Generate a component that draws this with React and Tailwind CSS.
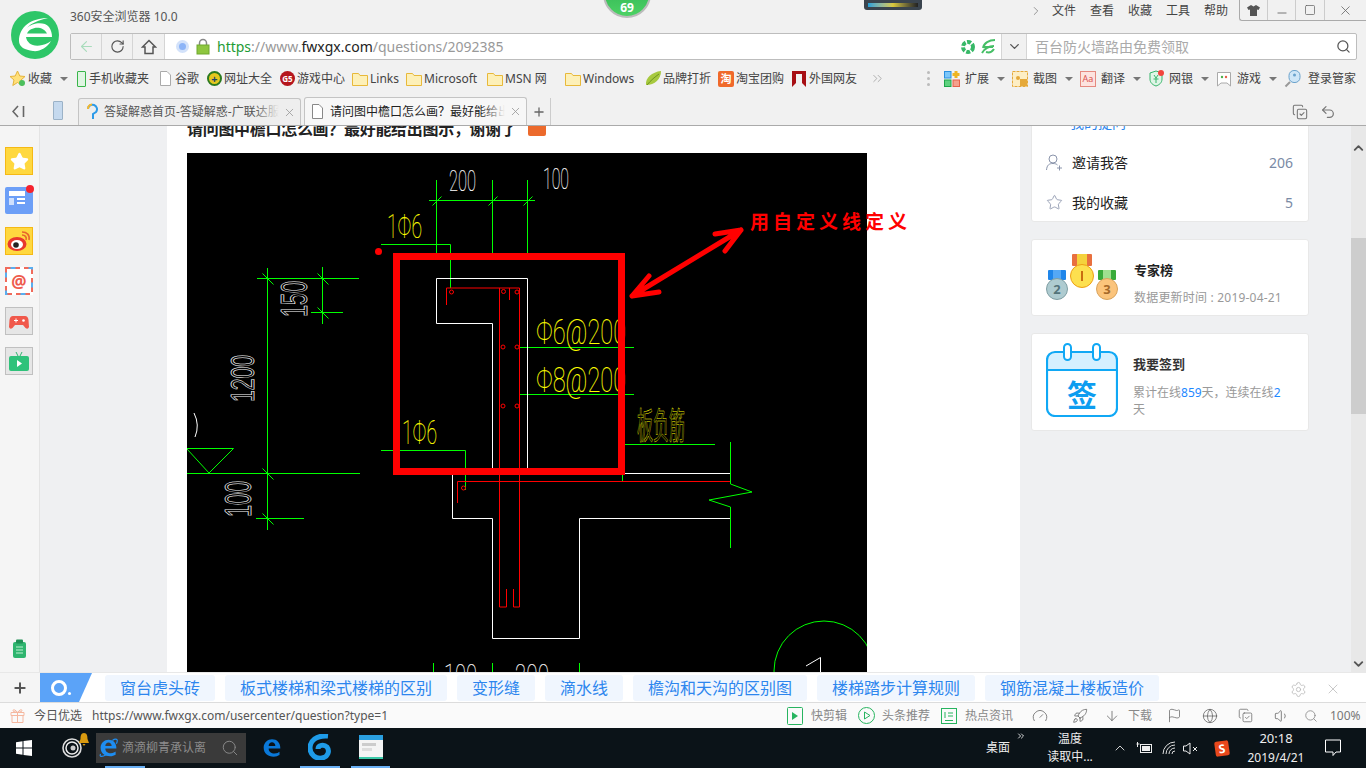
import React from "react";
import { Star, X, Search, ChevronRight, ChevronDown, ChevronUp, ChevronsRight, RotateCw, Plus, Settings, ArrowLeft, Minus, Square, Undo2, CopyCheck, ArrowDown, Flag, Volume1, Rocket, Gauge, Globe } from "lucide-react";

const TITLE = "请问图中檐口怎么画\uFF1F最好能给出图示\uFF0C谢谢了";
const Caret = () => <span className="ml-[8px] w-0 h-0 border-x-[4px] border-x-transparent border-t-[4px] border-t-[#777] inline-block" />;
const Folder = () => (
  <svg width="16" height="15" viewBox="0 0 16 15"><path d="M.5 2.500h6l1.500 2h7.500v10H.5z" fill="#fdf0b8" stroke="#e8b93a" /></svg>
);
const E_PATH = "M2 12C2 6 7 2 12 2C18 2 22 6 22 13H8C8 17 11 19 15 19C18 19 20 18 21 17V21C19 22 17 23 14 23C7 23 2 19 2 12zM8 10H16C16 7 14 5.500 12 5.500C10 5.500 8 7 8 10z";
function BM({ w, box, icon, text, caret, cls = "" }) {
  return (
    <div className={`flex items-center shrink-0 ${w} ${cls}`}>
      <div className={`flex items-center shrink-0 ${box}`}>{icon}</div>
      <span className="whitespace-nowrap">{text}</span>
      {caret && <Caret />}
    </div>
  );
}
function Tab({ active, icon, text }) {
  return (
    <div className={`relative flex items-center w-[223px] rounded-t-[3px] border border-b-0 border-[#c4c4c4] ${active ? "h-[28px] bg-[#f7f7f7]" : "h-[27px] bg-[#eeeeee]"}`}>
      <div className="w-[25px] flex justify-center shrink-0">{icon}</div>
      <div className={`w-[175px] overflow-hidden whitespace-nowrap relative ${active ? "text-[#222]" : "text-[#555]"}`}>
        {text}
        <div className={`absolute right-0 top-0 bottom-0 w-[24px] bg-gradient-to-r from-transparent ${active ? "to-[#f7f7f7]" : "to-[#eeeeee]"}`} />
      </div>
      <X size={13} className="ml-[4px] text-[#999]" strokeWidth={1.500} />
    </div>
  );
}
const Pill = ({ t }) => <div className="h-[26px] px-[15px] flex items-center bg-[#f0f6fe] text-[#2d86ee] text-[16px] rounded-[3px] whitespace-nowrap shrink-0">{t}</div>;
const SideIcon = ({ children, cls = "" }) => <div className={`relative w-[28px] h-[28px] flex items-center justify-center ${cls}`}>{children}</div>;

function Cad({ x, y, t, size = 28, len, color = "#fff" }) {
  return (
    <text x={x} y={y} fontSize={size} textLength={len} lengthAdjust="spacingAndGlyphs" fill={color} fontWeight="100"
      stroke={color} strokeWidth="0.15" fontFamily="Roboto, 'Liberation Sans', sans-serif">{t}</text>
  );
}
function CadRot({ x, y, t, size = 28, len }) {
  return (
    <text x={x} y={y} fontSize={size} textLength={len} lengthAdjust="spacingAndGlyphs" fill="none" stroke="#fff" strokeWidth="0.75"
      fontFamily="'Liberation Sans', sans-serif" transform={`rotate(-90 ${x} ${y})`}>{t}</text>
  );
}
const Tick = ({ x, y, back }) => back
  ? <path d={`M${x - 5} ${y - 5}L${x + 6} ${y + 6}`} stroke="#0f0" />
  : <path d={`M${x - 4} ${y + 5}L${x + 5} ${y - 4}`} stroke="#0f0" />;

function Drawing() {
  const g = "#00ff00", r = "#ff0000", w = "#ffffff", y = "#ffff00";
  const circles = [[503.500, 291.500], [517, 292], [451.500, 292], [503, 347], [517, 347], [503, 406], [517, 406], [463.500, 488]];
  return (
    <svg width="680" height="520" viewBox="187 153 680 520" className="block bg-black overflow-visible shrink-0">
      <defs><clipPath id="imgclip"><rect x="187" y="153" width="680" height="520" /></clipPath></defs>
      <g clipPath="url(#imgclip)">
      <g fill="none" stroke={g} strokeWidth="1">
        <path d="M436.500 180V253M492.500 180V253M527.500 180V253M429 200.500H535" />
        <path d="M381 244.500H450.500V288" />
        <path d="M267.500 268V530M257 278.500H359M322.500 267V324M311 312.500H343" />
        <path d="M187 473.500H360M256 518.500H304M187 448.500H233.500L209 473M187 449L209 473" />
        <path d="M381 450.500H465.500V490" />
        <path d="M520 347.500H634M520 394.500H634M625 444.500H715" />
        <path d="M730.500 442V484L752 492L709 500L730.500 507V548M622.500 475V481" />
        <path d="M433.500 663V673M492.500 663V673M579.500 663V673" />
        <circle cx="824" cy="671" r="50" />
      </g>
      <Tick x={436.500} y={200.500} /><Tick x={492.500} y={200.500} /><Tick x={527.500} y={200.500} />
      <Tick x={267.500} y={278.500} back /><Tick x={322.500} y={278.500} back /><Tick x={322.500} y={312.500} back />
      <Tick x={267.500} y={473.500} back /><Tick x={267.500} y={518.500} back />
      <g fill="none" stroke={w} strokeWidth="1">
        <path d="M436.500 278.500H527.500V473.500H730M436.500 278.500V323.500H492.500V468" />
        <path d="M452.500 473V518.500H492.500V638.500H579.500V518.500H730" />
        <path d="M194 413Q200 425 195 437" />
        <path d="M806 666L820.500 657.500V673" />
      </g>
      <g fill="none" stroke={r} strokeWidth="1">
        <path d="M446.500 305V288H519.500V589" />
        <path d="M499.500 288V607H506.500V589M513.500 589V607H519.500V589M509.500 288V300" />
        <path d="M457.500 503V481.500H730" />
        {circles.map(([a, b], i) => <circle key={i} cx={a} cy={b} r="2" />)}
      </g>
      <Cad x={449} y={191} t="200" size={29} len={27} />
      <Cad x={543} y={189} t="100" size={29} len={26} />
      <CadRot x={307} y={317} t="150" size={36} len={36} />
      <CadRot x={254} y={402} t="1200" size={34} len={47} />
      <CadRot x={251} y={517} t="100" size={36} len={36} />
      <Cad x={444} y={685} t="100" size={30} len={33} />
      <Cad x={515} y={685} t="200" size={30} len={34} />
      <Cad x={387} y={238} t="1Φ6" size={34} len={35} color={y} />
      <Cad x={402} y={444} t="1Φ6" size={34} len={35} color={y} />
      <Cad x={536} y={344} t="Φ6@200" size={35} len={90} color={y} />
      <Cad x={536} y={391.500} t="Φ8@200" size={35} len={90} color={y} />
      <text x="637" y="439" fontSize="36" textLength="48" lengthAdjust="spacingAndGlyphs" fill="none" stroke={y} strokeWidth="0.5" fontFamily="'Noto Sans CJK SC', sans-serif">板负筋</text>
      <circle cx="378.500" cy="251.500" r="3.500" fill={r} />
      <rect x="396.500" y="256.500" width="225" height="215" fill="none" stroke={r} strokeWidth="7" />
      <path d="M632 296L741 230M632 296L649 276M632 296L659 292M741 230L715 234M741 230L725 251" fill="none" stroke={r} strokeWidth="5" strokeLinecap="round" />
      </g>
      <text x="750" y="229" fontSize="19" letterSpacing="4" fill={r} fontWeight="700" fontFamily="'Noto Sans CJK SC', sans-serif">用自定义线定义</text>
    </svg>
  );
}

function Medals() {
  return (
    <svg width="73" height="47" viewBox="0 0 73 47" className="shrink-0">
      <rect x="2" y="16" width="18" height="10" rx="1" fill="#1f86ea" />
      <rect x="7" y="16" width="8" height="10" fill="#55a8f5" />
      <circle cx="11" cy="35" r="10.500" fill="#aecbd0" stroke="#7f9ea3" />
      <text x="11" y="40" textAnchor="middle" fontSize="13" fontWeight="700" fill="#53737a">2</text>
      <rect x="52" y="16" width="18" height="10" rx="1" fill="#3aab3a" />
      <rect x="57" y="16" width="8" height="10" fill="#9fe08f" />
      <circle cx="61" cy="35" r="10.500" fill="#fbc47c" stroke="#d9a35c" />
      <text x="61" y="40" textAnchor="middle" fontSize="13" fontWeight="700" fill="#a5682a">3</text>
      <rect x="26" y="0" width="20" height="12" rx="1" fill="#e8703f" />
      <rect x="31" y="0" width="10" height="12" fill="#f5d23c" />
      <circle cx="36" cy="22" r="11.500" fill="#fde04f" stroke="#ee9f14" />
      <rect x="35" y="17" width="2" height="10" fill="#c96d10" />
    </svg>
  );
}
function Calendar() {
  return (
    <svg width="72" height="74" viewBox="0 0 72 74" className="shrink-0 mt-[-4px]">
      <path d="M1 27V16a7 7 0 0 1 7-7h56a7 7 0 0 1 7 7v11z" fill="#d5f0ff" />
      <rect x="1" y="9" width="70" height="64" rx="8" fill="none" stroke="#10a8f5" strokeWidth="2.200" />
      <path d="M1 27H71" stroke="#10a8f5" strokeWidth="2" />
      <rect x="18" y="1" width="7" height="16" rx="3.500" fill="#fff" stroke="#10a8f5" strokeWidth="2" />
      <rect x="47" y="1" width="7" height="16" rx="3.500" fill="#fff" stroke="#10a8f5" strokeWidth="2" />
      <text x="36" y="63" textAnchor="middle" fontSize="30" fontWeight="700" fill="#0d9df0" fontFamily="'Noto Sans CJK SC', sans-serif">签</text>
    </svg>
  );
}
const Logo = () => (
  <svg width="48" height="48" viewBox="0 0 48 48">
    <circle cx="24" cy="24" r="24" fill="#2ec668" />
    <path d="M8 30C8 16 20 7 37 7C28 9 20 12 16 17C21 12 33 10 38 16C40 19 41 22 41 26H15C16 33 24 38 37 32L40 30C36 37 28 41 22 40C14 39 8 36 8 30z" fill="#fff" />
    <path d="M16 22.500C19 15.500 32 14 36 22.500z" fill="#2ec668" />
  </svg>
);

export default function App() {
  return (
    <div className="relative w-[1366px] h-[768px] overflow-hidden flex flex-col bg-white text-[12px] font-['Noto_Sans','Noto_Sans_CJK_SC',sans-serif]">
      <div className="absolute left-[603px] top-[-30px] w-[48px] h-[48px] rounded-full bg-gradient-to-b from-[#24a94f] to-[#4cd264] border-2 border-[#bbb] flex items-end justify-center z-10">
        <span className="text-white text-[12px] font-bold leading-[16px]">69</span>
      </div>
      <div className="absolute left-[864px] top-0 w-[58px] h-[10px] bg-[#3a444e] rounded-b-[3px] flex items-center justify-center z-10">
        <div className="w-[50px] h-[4px] bg-gradient-to-r from-[#1d9fd8] via-[#d9c83a] to-[#222]" />
      </div>

      <div className="h-[126px] shrink-0 bg-[#f1f1f1] flex flex-col text-[#444]">
        <div className="flex h-[67px]">
          <div className="w-[70px] pl-[11px] pt-[11px] shrink-0"><Logo /></div>
          <div className="flex-1 flex flex-col">
            <div className="h-[33px] flex justify-between items-start">
              <div className="text-[#555] h-[33px] leading-[34px] whitespace-nowrap">360安全浏览器 10.0</div>
              <div className="flex items-start">
                <div className="flex items-center h-[21px] text-[#444]">
                  <ChevronRight size={14} className="text-[#888] mr-[9px]" strokeWidth={1.500} />
                  <span className="w-[38px]">文件</span><span className="w-[38px]">查看</span><span className="w-[38px]">收藏</span><span className="w-[38px]">工具</span><span className="w-[35px]">帮助</span>
                </div>
                <div className="flex h-[21px] border-l border-b border-[#aaa] rounded-bl-[3px]">
                  <div className="w-[28px] flex items-center justify-center border-r border-[#ccc]">
                    <svg width="13" height="11" viewBox="0 0 13 11"><path d="M4 0L0 2.500L1.500 5L3 4.500V11H10V4.500L11.500 5L13 2.500L9 0L6.500 1.500z" fill="#555" /></svg>
                  </div>
                  <div className="w-[28px] flex items-center justify-center border-r border-[#ccc]"><Minus size={14} className="text-[#666] mt-[5px]" strokeWidth={1.500} /></div>
                  <div className="w-[29px] flex items-center justify-center border-r border-[#ccc]"><Square size={12} className="text-[#666]" strokeWidth={1.500} /></div>
                  <div className="w-[41px] flex items-center justify-center"><X size={15} className="text-[#666]" strokeWidth={1.300} /></div>
                </div>
              </div>
            </div>
            <div className="h-[27px] mr-[9px] flex border border-[#bdbdbd] rounded-[2px] bg-white">
              <div className="w-[31px] flex items-center justify-center bg-[#f1f1f1] border-r border-[#d5d5d5]"><ArrowLeft size={17} className="text-[#a9dcbc]" strokeWidth={1.600} /></div>
              <div className="w-[31px] flex items-center justify-center bg-[#f1f1f1] border-r border-[#d5d5d5]"><RotateCw size={15} className="text-[#555]" strokeWidth={1.800} /></div>
              <div className="w-[32px] flex items-center justify-center bg-[#f1f1f1] border-r border-[#d5d5d5]">
                <svg width="16" height="16" viewBox="0 0 16 16"><path d="M8 1.500L1.500 8H4V14.500H12V8H14.500z" fill="none" stroke="#555" strokeWidth="1.500" /></svg>
              </div>
              <div className="flex-1 flex items-center pl-[11px]">
                <div className="w-[13px] h-[13px] rounded-full bg-[#8cb4f7] border-[3px] border-[#d3e2fa]" />
                <svg width="14" height="17" viewBox="0 0 14 17" className="ml-[7px]"><path d="M3.500 8V5a3.500 3.500 0 0 1 7 0v3" fill="none" stroke="#888" strokeWidth="1.500" /><rect x="1" y="7" width="12" height="9" fill="#8ec63f" stroke="#6fa82e" /></svg>
                <div className="ml-[7px] text-[14px] whitespace-nowrap">
                  <span className="text-[#1d9b35]">https</span><span className="text-[#999]">://www.</span><span className="text-[#222]">fwxgx.com</span><span className="text-[#999]">/questions/2092385</span>
                </div>
                <div className="ml-auto flex items-center gap-[6px] pr-[5px]">
                  <svg width="14" height="14" viewBox="0 0 14 14"><circle cx="7" cy="7" r="5" fill="none" stroke="#37b867" strokeWidth="4" strokeDasharray="4 1.500" /></svg>
                  <svg width="15" height="15" viewBox="0 0 15 15"><path d="M2 9C3 4 8 1 14 1M1 14C4 9 8 7 13 7M3 8H12M5 13C8 14 11 13 13 10" fill="none" stroke="#46bf66" strokeWidth="2" /></svg>
                </div>
              </div>
              <div className="w-[26px] flex items-center justify-center bg-[#f1f1f1] border-x border-[#d5d5d5]"><ChevronDown size={15} className="text-[#555]" strokeWidth={2.200} /></div>
              <div className="w-[329px] flex items-center pl-[8px] text-[14px] text-[#aaa] whitespace-nowrap">
                百台防火墙路由免费领取
                <Search size={15} className="ml-auto mr-[5px] text-[#555]" strokeWidth={2} />
              </div>
            </div>
          </div>
        </div>

        <div className="h-[23px] flex items-center pl-[10px]">
          <BM w="w-[67px]" box="w-[18px]" text="收藏" caret icon={
            <svg width="16" height="17" viewBox="0 0 16 17"><path d="M7.500 1L9.800 6L15 6.500L11 10L12.200 15.500L7.500 12.500L2.800 15.500L4 10L0 6.500L5.200 6z" fill="#ffe07a" stroke="#e6b43a" /><circle cx="12" cy="13" r="3" fill="#4cbf5d" /></svg>} />
          <BM w="w-[83px]" box="w-[12px]" text="手机收藏夹" icon={<div className="w-[9px] h-[16px] border border-[#39b54a] rounded-[1px] bg-[#dff5e2]" />} />
          <BM w="w-[47px]" box="w-[15px]" text="谷歌" icon={<svg width="11" height="15" viewBox="0 0 11 15"><path d="M.5.500H7L10.500 4V14.500H.5z" fill="#fff" stroke="#aaa" /></svg>} />
          <BM w="w-[73px]" box="w-[17px]" text="网址大全" icon={<div className="w-[15px] h-[15px] rounded-full bg-[#e6c81f] border-2 border-[#2c7a20] flex items-center justify-center text-[#246] text-[11px] font-bold leading-none">+</div>} />
          <BM w="w-[72px]" box="w-[17px]" text="游戏中心" icon={<div className="w-[15px] h-[15px] rounded-full bg-[#b5161d] text-white text-[8px] font-bold flex items-center justify-center leading-none">G5</div>} />
          <BM w="w-[54px]" box="w-[18px]" text="Links" icon={<Folder />} />
          <BM w="w-[81px]" box="w-[18px]" text="Microsoft" icon={<Folder />} />
          <BM w="w-[78px]" box="w-[18px]" text="MSN 网" icon={<Folder />} />
          <BM w="w-[80px]" box="w-[18px]" text="Windows" icon={<Folder />} />
          <BM w="w-[73px]" box="w-[18px]" text="品牌打折" icon={<svg width="17" height="15" viewBox="0 0 17 15"><path d="M1 14C0 7 7 1 16 0C16 8 10 14 1 14z" fill="#a7c93f" /><path d="M2 14C6 9 10 6 14 3" stroke="#6d9420" fill="none" /></svg>} />
          <BM w="w-[74px]" box="w-[18px]" text="淘宝团购" icon={<div className="w-[16px] h-[16px] bg-[#f0692a] rounded-[2px] text-white text-[11px] leading-[16px] text-center font-bold">淘</div>} />
          <BM w="w-[78px]" box="w-[17px]" text="外国网友" icon={<svg width="14" height="16" viewBox="0 0 14 16"><path d="M0 0H14V16L10 12V3H4V12L0 16z" fill="#a70f14" /></svg>} />
          <ChevronsRight size={15} className="text-[#999] shrink-0" strokeWidth={1.200} />
          <div className="w-[46px] shrink-0 flex justify-end pr-[1px]">
            <div className="flex flex-col gap-[3px]"><i className="w-[3px] h-[3px] bg-[#bbb] rounded-full block" /><i className="w-[3px] h-[3px] bg-[#bbb] rounded-full block" /><i className="w-[3px] h-[3px] bg-[#bbb] rounded-full block" /></div>
          </div>
          <div className="w-[13px] shrink-0" />
          <BM w="w-[68px]" box="w-[21px]" text="扩展" caret icon={
            <svg width="16" height="16" viewBox="0 0 16 16"><rect x=".5" y=".5" width="6.500" height="6.500" fill="#7cc7fa" stroke="#2b90e0" /><rect x=".5" y="9" width="6.500" height="6.500" fill="#5fd17f" stroke="#1ea64a" /><rect x="9" y="9" width="6.500" height="6.500" fill="#f5a08d" stroke="#e5604a" /><path d="M12 0V7M8.500 3.500H15.500" stroke="#eeb422" strokeWidth="3" /></svg>} />
          <BM w="w-[68px]" box="w-[21px]" text="截图" caret icon={
            <svg width="16" height="16" viewBox="0 0 16 16"><rect x=".5" y=".5" width="15" height="15" fill="#fdeec4" stroke="#e5a93a" strokeDasharray="3 1" /><rect x="8" y="8" width="7" height="7" fill="#e5a93a" /><circle cx="6" cy="7" r="2" fill="#e5a93a" /></svg>} />
          <BM w="w-[69px]" box="w-[21px]" text="翻译" caret icon={
            <div className="w-[16px] h-[16px] border border-[#e58a80] bg-[#fde3df] text-[#d9534f] text-[9px] leading-[14px] text-center">Aa</div>} />
          <BM w="w-[67px]" box="w-[20px]" text="网银" caret icon={
            <svg width="15" height="17" viewBox="0 0 15 17"><path d="M1 3L7 1L13 3V9C13 13 10 15 7 16C4 15 1 13 1 9z" fill="#dff5e6" stroke="#36b56a" /><path d="M5 5L7 8L9 5M4.500 9H9.500M7 8V13" stroke="#36b56a" fill="none" /><circle cx="12" cy="3" r="3" fill="#f2453d" /></svg>} />
          <BM w="w-[68px]" box="w-[21px]" text="游戏" caret icon={
            <svg width="16" height="16" viewBox="0 0 16 16"><path d="M1.500 1.500H14.500V15L11 12H5L1.500 15z" fill="#fff" stroke="#aaa" /><circle cx="6" cy="6" r="1.200" fill="#4bb04b" /><circle cx="10" cy="6" r="1.200" fill="#e5604a" /></svg>} />
          <BM w="w-[72px]" box="w-[24px]" text="登录管家" icon={
            <svg width="17" height="18" viewBox="0 0 17 18"><rect x="5" y="0.500" width="11" height="12" rx="5" fill="#cfe6f7" stroke="#6aa2cc" /><circle cx="10.500" cy="5" r="1.500" fill="#6aa2cc" /><path d="M6 12L1.500 16.500" stroke="#999" strokeWidth="2" /></svg>} />
        </div>

        <div className="h-[36px] flex items-end relative border-b border-[#aaa]">
          <div className="w-[40px] h-[27px] flex items-center justify-center pr-[2px] shrink-0 text-[#666]">
            <svg width="14" height="13" viewBox="0 0 14 13"><path d="M6 1L1 6.500L6 12M11.500 1V12" fill="none" stroke="#666" strokeWidth="1.600" /></svg>
          </div>
          <div className="w-[38px] h-[27px] flex items-center justify-center shrink-0">
            <div className="w-[10px] h-[19px] mb-[2px] mr-[2px] bg-[#c5d9ee] border border-[#9bb2c7] rounded-[1px]" />
          </div>
          <Tab text="答疑解惑首页-答疑解惑-广联达服务新干线" icon={
            <svg width="12" height="18" viewBox="0 0 12 18"><path d="M2 6a4.500 4.500 0 1 1 8 3L7 11V16" fill="none" stroke="#2d9be8" strokeWidth="2" /><path d="M2 6a4.500 4.500 0 0 1 4-4.500" fill="none" stroke="#f5b82e" strokeWidth="2" /></svg>} />
          <div className="w-[3px] shrink-0" />
          <Tab active text={TITLE} icon={
            <svg width="11" height="15" viewBox="0 0 11 15"><path d="M.5.500H7L10.500 4V14.500H.5z" fill="#fff" stroke="#888" /></svg>} />
          <div className="w-[24px] h-[27px] flex items-center justify-center border-r border-[#ccc] shrink-0"><Plus size={14} className="text-[#666]" strokeWidth={2.200} /></div>
          <div className="ml-auto h-[27px] flex items-center pr-[30px] gap-[12px] text-[#777]">
            <CopyCheck size={16} strokeWidth={1.600} />
            <Undo2 size={16} strokeWidth={1.800} />
          </div>
        </div>
      </div>

      <div className="flex-1 min-h-0 flex overflow-hidden bg-[#eff0f2]">
        <div className="w-[40px] shrink-0 bg-[#f5f5f5] border-r border-[#e4e4e4] flex flex-col items-start pl-[5px] pt-[21px] gap-[12px]">
          <SideIcon cls="bg-[#ffd83f] border border-[#f5b915]"><Star size={19} fill="#fff" stroke="#fff" /></SideIcon>
          <div className="relative w-[28px] h-[27px] bg-[#6d9ff7] rounded-[2px] flex flex-col p-[4px] gap-[2px]">
            <div className="h-[5px] w-[16px] bg-white" />
            <div className="flex gap-[3px]"><div className="w-[5px] h-[7px] bg-[#cfe0fd]" /><div className="flex flex-col gap-[2px]"><div className="w-[8px] h-[2px] bg-white" /><div className="w-[8px] h-[2px] bg-white" /></div></div>
            <div className="absolute right-[-1px] top-[-2px] w-[8px] h-[8px] rounded-full bg-[#f5222d]" />
          </div>
          <SideIcon cls="bg-[#ffd83f] border border-[#f5b915] mt-[1px]">
            <svg width="24" height="22" viewBox="0 0 24 22"><ellipse cx="10" cy="14" rx="9.500" ry="7" fill="#e8382d" /><ellipse cx="10" cy="14.500" rx="6" ry="4.500" fill="#fff" /><circle cx="9" cy="15" r="2.800" fill="#222" /><path d="M15 2C20 2 23 5 22 10M15 5C18 5 20 7 19 10" fill="none" stroke="#e8662d" strokeWidth="1.600" /></svg>
          </SideIcon>
          <SideIcon cls="bg-white">
            <svg width="28" height="28" viewBox="0 0 28 28" className="absolute left-0 top-0"><rect x="1" y="1" width="26" height="26" fill="none" stroke="#f06a5a" strokeWidth="2" strokeDasharray="5 4" /><rect x="1" y="1" width="26" height="26" fill="none" stroke="#58aef0" strokeWidth="2" strokeDasharray="5 13" strokeDashoffset="-4.500" /></svg>
            <span className="text-[#ee5b4d] text-[17px] font-bold leading-none">@</span>
          </SideIcon>
          <SideIcon cls="bg-[#e6e6e6] border border-[#c0c0c0]">
            <svg width="20" height="17" viewBox="0 0 20 17"><path d="M10 0V2M4 3H16Q19 3 19.500 7L20 14Q19 17 16.500 15L14 12H6L3.500 15Q1 17 0 14L.5 7Q1 3 4 3z" fill="#f0584a" /><path d="M5 7.500H9M7 5.500V9.500" stroke="#fff" /><circle cx="14.500" cy="7.500" r="1.300" fill="#fff" /></svg>
          </SideIcon>
          <SideIcon cls="bg-[#e6e6e6] border border-[#c0c0c0]">
            <svg width="20" height="19" viewBox="0 0 20 19"><path d="M7 0L9 4M13 0L11 4" stroke="#2fb56f" /><rect y="4" width="20" height="15" rx="2" fill="#2fc27a" /><path d="M8 8V15L13 11.500z" fill="#fff" /></svg>
          </SideIcon>
          <div className="mt-auto mb-[13px] ml-[7px]">
            <svg width="15" height="20" viewBox="0 0 15 20"><rect x="1" y="3" width="13" height="16" rx="2" fill="#2fb56f" /><rect x="4" y="0.500" width="7" height="4" rx="1" fill="#1f8f55" /><path d="M4 8H11M4 11H11M4 14H11" stroke="#bff0d2" /></svg>
          </div>
        </div>

        <div className="w-[127px] shrink-0" />

        <div className="w-[853px] shrink-0 bg-white pl-[20px] overflow-hidden">
          <div className="-mt-[9px] h-[24px] flex items-center">
            <div className="w-[336px] text-[16px] tracking-[-0.3px] font-bold text-[#222] whitespace-nowrap leading-[24px] shrink-0">{TITLE}</div>
            <div className="w-[18px] h-[17px] ml-[5px] bg-[#ec6a2c] rounded-[2px] mt-[-3px] shrink-0" />
          </div>
          <div className="mt-[12px]"><Drawing /></div>
        </div>

        <div className="flex-1 pl-[11px] flex flex-col items-start overflow-hidden">
          <div className="-mt-[25px] w-[278px] h-[121px] bg-white rounded-[3px] border border-[#e8e8e8] shrink-0 text-[#222] text-[14px]">
            <div className="h-[40px] flex items-center pl-[14px] text-[#2d86ee]">
              <ChevronUp size={15} className="mr-[9px]" /> 我的提问
            </div>
            <div className="h-[41px] flex items-center pl-[14px] pr-[15px]">
              <svg width="16" height="17" viewBox="0 0 16 17" className="mr-[10px]"><circle cx="7" cy="5" r="4" fill="none" stroke="#8a94ab" /><path d="M.5 16C1 11 3 9.500 7 9.500C9 9.500 10.500 10 11.500 11M11 14H16M13.500 11.500V16.500" fill="none" stroke="#8a94ab" /></svg>
              邀请我答<span className="ml-auto text-[#7a8aa5] text-[14px]">206</span>
            </div>
            <div className="h-[38px] flex items-center pl-[14px] pr-[15px]">
              <Star size={17} className="mr-[9px] text-[#8a94ab]" strokeWidth={1.200} />
              我的收藏<span className="ml-auto text-[#7a8aa5] text-[14px]">5</span>
            </div>
          </div>
          <div className="mt-[17px] w-[278px] h-[77px] bg-white rounded-[3px] border border-[#e8e8e8] flex items-center pl-[14px] shrink-0">
            <Medals />
            <div className="ml-[15px] mt-[13px] flex flex-col">
              <div className="text-[13px] font-bold text-[#222] leading-[18px] mb-[10px]">专家榜</div>
              <div className="text-[12px] text-[#999] leading-[18px] whitespace-nowrap tracking-[0.2px]">数据更新时间 : 2019-04-21</div>
            </div>
          </div>
          <div className="mt-[17px] w-[278px] h-[98px] bg-white rounded-[3px] border border-[#e8e8e8] flex items-center pl-[14px] shrink-0">
            <Calendar />
            <div className="ml-[15px] mt-[9px] flex flex-col w-[150px]">
              <div className="text-[13px] font-bold text-[#333] leading-[18px] mb-[11px]">我要签到</div>
              <div className="text-[12px] text-[#999] leading-[17px]">累计在线<span className="text-[#1e88ff]">859</span>{"天\uFF0C连续在线"}<span className="text-[#1e88ff]">2</span>天</div>
            </div>
          </div>
        </div>

        <div className="w-[15px] shrink-0 bg-[#e8e8e8] flex flex-col">
          <div className="h-[112px] pt-[14px] flex justify-center"><ChevronUp size={16} className="text-[#555]" strokeWidth={3} /></div>
          <div className="h-[176px] bg-[#cdcdcd]" />
          <div className="flex-1 flex justify-center items-end"><ChevronDown size={16} className="text-[#555]" strokeWidth={3} /></div>
        </div>
      </div>

      <div className="h-[30px] shrink-0 flex bg-white border-t border-[#e8e8e8]">
        <div className="w-[40px] flex items-center justify-center bg-[#f5f5f5]"><Plus size={16} className="text-[#555]" strokeWidth={3} /></div>
        <div className="w-[52px] bg-[#5ba3f8] [clip-path:polygon(0_0,100%_0,75%_100%,0_100%)] flex items-center pl-[11px]">
          <div className="w-[16px] h-[16px] rounded-full border-[3px] border-white" />
          <div className="w-[3px] h-[3px] rounded-full bg-white ml-[1px] mt-[12px]" />
        </div>
        <div className="flex items-start gap-[10px] ml-[13px] pt-[2px] flex-1">
          <Pill t="窗台虎头砖" />
          <Pill t="板式楼梯和梁式楼梯的区别" />
          <Pill t="变形缝" />
          <Pill t="滴水线" />
          <Pill t="檐沟和天沟的区别图" />
          <Pill t="楼梯踏步计算规则" />
          <Pill t="钢筋混凝土楼板造价" />
          <div className="ml-auto h-[28px] flex items-center gap-[18px] pr-[25px] text-[#bbb]">
            <Settings size={17} strokeWidth={1.200} />
            <X size={16} strokeWidth={1.200} />
          </div>
        </div>
      </div>

      <div className="h-[26px] shrink-0 flex items-center bg-[#fafafa] border-t border-[#dcdcdc] text-[#666]">
        <div className="w-[34px] flex justify-center pl-[1px] shrink-0">
          <svg width="15" height="15" viewBox="0 0 15 15"><path d="M1 4.500H14V7.500H1zM2 7.500V14.500H13V7.500M7.500 4.500V14.500M7.500 4.500C5 1 2 1 3.500 3.500zM7.500 4.500C10 1 13 1 11.500 3.500z" fill="none" stroke="#f5b8a0" /></svg>
        </div>
        <span className="w-[58px] text-[#555] shrink-0">今日优选</span>
        <span className="text-[#555] whitespace-nowrap">https://www.fwxgx.com/usercenter/question?type=1</span>
        <div className="ml-auto flex items-center text-[#888]">
          <div className="w-[71px] flex items-center"><svg width="16" height="18" viewBox="0 0 16 18" className="mr-[8px]"><rect x=".5" y=".5" width="15" height="17" rx="1" fill="none" stroke="#27b45f" /><path d="M5 5V13L11 9z" fill="#27b45f" /></svg>快剪辑</div>
          <div className="w-[83px] flex items-center"><svg width="17" height="17" viewBox="0 0 17 17" className="mr-[7px]"><circle cx="8.500" cy="8.500" r="8" fill="none" stroke="#27b45f" /><path d="M6.500 5V12L12 8.500z" fill="none" stroke="#27b45f" /></svg>头条推荐</div>
          <div className="w-[91px] flex items-center"><svg width="16" height="16" viewBox="0 0 16 16" className="mr-[8px]"><rect x=".5" y=".5" width="15" height="15" fill="none" stroke="#27b45f" /><path d="M4 4V10M4 12.500H12M7 5H12M7 8H12" stroke="#27b45f" fill="none" /></svg>热点资讯</div>
          <div className="w-[40px] flex"><Gauge size={16} strokeWidth={1.200} className="text-[#666]" /></div>
          <div className="w-[32px] flex"><Rocket size={16} strokeWidth={1.200} className="text-[#666]" /></div>
          <div className="w-[63px] flex items-center"><ArrowDown size={16} strokeWidth={1.200} className="text-[#666] mr-[8px]" />下载</div>
          <div className="w-[35px] flex"><Flag size={15} strokeWidth={1.200} className="text-[#666]" /></div>
          <div className="w-[36px] flex"><Globe size={16} strokeWidth={1.200} className="text-[#666]" /></div>
          <div className="w-[36px] flex"><CopyCheck size={15} strokeWidth={1.200} className="text-[#666]" /></div>
          <div className="w-[30px] flex"><Volume1 size={16} strokeWidth={1.200} className="text-[#666]" /></div>
          <div className="w-[26px] flex"><Search size={14} strokeWidth={1.400} className="text-[#888]" /></div>
          <div className="w-[36px] text-[#777]">100%</div>
        </div>
      </div>

      <div className="h-[40px] shrink-0 flex items-center bg-[#0b1318] text-[#ddd]">
        <div className="w-[48px] flex justify-center shrink-0">
          <svg width="16" height="16" viewBox="0 0 16 16"><path d="M0 2.200L6.500 1.200V7.500H0zM7.500 1L16 0V7.500H7.500zM0 8.500H6.500V14.800L0 13.800zM7.500 8.500H16V16L7.500 15z" fill="#fff" /></svg>
        </div>
        <div className="w-[48px] h-full relative flex items-center justify-center shrink-0">
          <svg width="20" height="20" viewBox="0 0 20 20"><circle cx="10" cy="10" r="9" fill="none" stroke="#ddd" strokeWidth="1.600" /><circle cx="10" cy="10" r="6" fill="none" stroke="#eee" strokeWidth="1.500" /><circle cx="11" cy="10" r="2.500" fill="#ccc" /></svg>
          <svg width="12" height="14" viewBox="0 0 12 14" className="absolute left-[30px] top-[5px]"><path d="M6 0C3 0 2.500 3 2.500 6L1 10H11L9.500 6C9.500 3 9 0 6 0zM4.500 11H7.500L6 13z" fill="#d99a10" /></svg>
        </div>
        <div className="w-[150px] h-[30px] bg-[#3a3a3a] flex items-center pl-[3px] shrink-0 relative">
          <svg width="19" height="20" viewBox="0 0 24 25" className="mr-[4px]">
            <path d={E_PATH} fill="#1e8df0" fillRule="evenodd" />
            <path d="M2 20C0 24 4 24 9 21M17 3C21 0 25 1 22 7" fill="none" stroke="#1e8df0" strokeWidth="1.500" />
          </svg>
          <span className="text-[#8c8c8c] whitespace-nowrap">滴滴柳青承认离</span>
          <Search size={18} strokeWidth={1.300} className="ml-auto mr-[7px] text-[#888]" />
          <div className="absolute left-[9px] top-[33px] w-[40px] h-[2px] bg-[#6ab0f5]" />
        </div>
        <div className="w-[50px] ml-[1px] flex justify-center shrink-0">
          <svg width="20" height="22" viewBox="0 0 24 25"><path d={E_PATH} fill="#0a78d8" fillRule="evenodd" /></svg>
        </div>
        <div className="w-[40px] h-full ml-[3px] flex items-center justify-center border-b-2 border-[#6ab0f5] shrink-0">
          <svg width="24" height="26" viewBox="0 0 24 26"><path d="M20 2C8 1 2 7 2 14C2 21 8 25 14 24C20 23 22 17 19 13C16 10 10 11 10 15" fill="none" stroke="#1e9be8" strokeWidth="5" /></svg>
        </div>
        <div className="w-[39px] h-full ml-[11px] flex items-center justify-center border-b-2 border-[#6ab0f5] shrink-0">
          <div className="w-[24px] h-[24px] bg-[#f4f4f4] border-t-[5px] border-t-[#2a9fe0] border-b-[2px] border-b-[#3bc9a8] flex flex-col p-[3px] gap-[2px]"><div className="h-[3px] w-[14px] bg-[#ccc]" /><div className="h-[3px] w-[10px] bg-[#ddd]" /></div>
        </div>

        <div className="ml-auto flex items-center h-full">
          <span className="w-[30px] text-[12px] text-[#eee]">桌面</span>
          <div className="w-[14px] h-full pt-[3px]"><ChevronsRight size={10} className="text-white" /></div>
          <div className="w-[80px] text-center leading-[18px] text-[#eee]">
            <div>温度</div>
            <div>读取中...</div>
          </div>
          <div className="w-[20px] flex justify-center"><ChevronUp size={16} className="text-[#eee]" strokeWidth={1.300} /></div>
          <div className="w-[28px] flex justify-center">
            <svg width="16" height="12" viewBox="0 0 16 12"><rect x="4.500" y="2.500" width="11" height="8" fill="none" stroke="#eee" /><rect x="6" y="4" width="8" height="5" fill="#eee" /><path d="M1.500 0V5M.5 2H3.500" stroke="#eee" /></svg>
          </div>
          <div className="w-[22px] flex justify-center">
            <svg width="14" height="14" viewBox="0 0 14 14"><path d="M1 13A12 12 0 0 1 13 1M4 13A9 9 0 0 1 13 4M7 13A6 6 0 0 1 13 7M10 13A3 3 0 0 1 13 10" fill="none" stroke="#ddd" /></svg>
          </div>
          <div className="w-[20px] flex justify-center">
            <svg width="15" height="13" viewBox="0 0 15 13"><path d="M.5 4H3L7 1V12L3 9H.5z" fill="none" stroke="#eee" /><path d="M10 5L14 9M14 5L10 9" stroke="#eee" /></svg>
          </div>
          <div className="w-[28px] ml-[8px] flex justify-center">
            <div className="w-[14px] h-[15px] bg-[#e8481c] rounded-[2px] rotate-[-8deg] text-white text-[12px] font-bold leading-[15px] text-center">S</div>
          </div>
          <div className="w-[80px] text-center text-[#eee] leading-[20px]">
            <div className="text-[13px]">20:18</div>
            <div className="text-[12px] whitespace-nowrap">2019/4/21</div>
          </div>
          <div className="w-[34px] flex justify-center">
            <svg width="16" height="18" viewBox="0 0 16 18"><path d="M.5 1H15.500V13H11L8 16.500V13H.5z" fill="none" stroke="#fff" /></svg>
          </div>
          <div className="w-[16px]" />
        </div>
      </div>
    </div>
  );
}
